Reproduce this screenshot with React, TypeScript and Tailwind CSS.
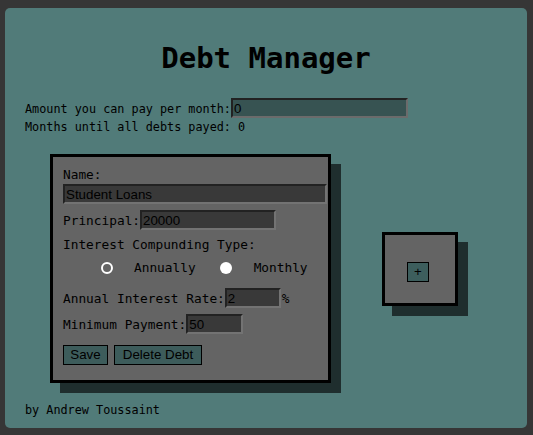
import { useState } from "react";

function Field({ value, className }: { value: string; className: string }) {
  return (
    <input
      readOnly
      value={value}
      className={`h-[20px] border-2 border-t-[#222] border-l-[#222] border-b-[#737373] border-r-[#737373] bg-[#393939] pl-[1px] font-['Liberation_Sans',Arial,sans-serif] text-[13.33px] text-black outline-none ${className}`}
    />
  );
}

function DebtCard() {
  const [monthly, setMonthly] = useState(true);

  return (
    <div className="relative w-[281px] h-[229px]">
      <div className="absolute left-[10px] top-[10px] w-[281px] h-[229px] bg-[#1f2e2e]" />
      <div className="relative w-[281px] h-[229px] border-[3px] border-black bg-[#646464] pl-[10px] pt-[8px] text-[12.8px] text-black">
        <div className="leading-[19px]">Name:</div>
        <Field value="Student Loans" className="w-[264px] block" />
        <div className="mt-[6px] flex items-baseline leading-[19px]">
          <span>Principal:</span>
          <Field value="20000" className="w-[136px]" />
        </div>
        <div className="mt-[5px] leading-[19px]">Interest Compunding Type:</div>
        <div className="mt-[4px] flex h-[20px] items-center pl-[38px] leading-[20px]">
          <button
            onClick={() => setMonthly(false)}
            className={`h-[12px] w-[12px] rounded-full ${!monthly ? "bg-white" : "border-2 border-white bg-[#646464]"}`}
          />
          <span className="ml-[21px]">Annually</span>
          <button
            onClick={() => setMonthly(true)}
            className={`ml-[24px] h-[12px] w-[12px] rounded-full ${monthly ? "bg-white" : "border-2 border-white bg-[#646464]"}`}
          />
          <span className="ml-[22px]">Monthly</span>
        </div>
        <div className="mt-[10px] flex items-baseline leading-[19px]">
          <span>Annual Interest Rate:</span>
          <Field value="2" className="w-[56px]" />
          <span className="ml-[1px]">%</span>
        </div>
        <div className="mt-[6px] flex items-baseline leading-[19px]">
          <span>Minimum Payment:</span>
          <Field value="50" className="w-[57px]" />
        </div>
        <div className="mt-[11px] flex gap-[6px] font-['Liberation_Sans',Arial,sans-serif] text-[13.33px]">
          <button className="h-[20px] w-[45px] border border-black bg-[#3d5c5b] leading-[18px] text-black">Save</button>
          <button className="h-[20px] w-[88px] border border-black bg-[#3d5c5b] leading-[18px] text-black">Delete Debt</button>
        </div>
      </div>
    </div>
  );
}

function AddCard() {
  return (
    <div className="relative w-[76px] h-[74px]">
      <div className="absolute left-[10px] top-[10px] w-[76px] h-[74px] bg-[#1f2e2e]" />
      <div className="relative w-[76px] h-[74px] border-[3px] border-black bg-[#646464] pl-[22px] pt-[24px]">
        <button className="h-[20px] w-[22px] border border-black bg-[#3d5e5d] font-['Liberation_Sans',Arial,sans-serif] text-[13.33px] leading-[18px] text-black">
          +
        </button>
      </div>
    </div>
  );
}

export default function App() {
  return (
    <div className="min-h-screen bg-[#363636] pl-[5px] pt-[8px]">
      <div className="h-[420px] w-[522px] rounded-[5px] bg-[#517b79] px-[20px] pt-[33px] font-['DejaVu_Sans_Mono',monospace] text-black">
        <h1 className="text-center text-[29px] font-bold leading-[34px]">Debt Manager</h1>
        <div className="mt-[23px] flex items-baseline text-[11.8px] leading-[16px]">
          <span>Amount you can pay per month:</span>
          <input
            readOnly
            value="0"
            className="h-[20px] w-[177px] border-2 border-t-[#222] border-l-[#222] border-b-[#6b6b6b] border-r-[#6b6b6b] bg-[#375352] pl-[1px] font-['Liberation_Sans',Arial,sans-serif] text-[13.33px] text-black outline-none"
          />
        </div>
        <div className="text-[11.8px] leading-[18px]">Months until all debts payed: 0</div>
        <div className="mt-[18px] flex items-center gap-[51px] pl-[25px]">
          <DebtCard />
          <AddCard />
        </div>
        <div className="mt-[18px] text-[11.8px] leading-[18px]">by Andrew Toussaint</div>
      </div>
    </div>
  );
}
